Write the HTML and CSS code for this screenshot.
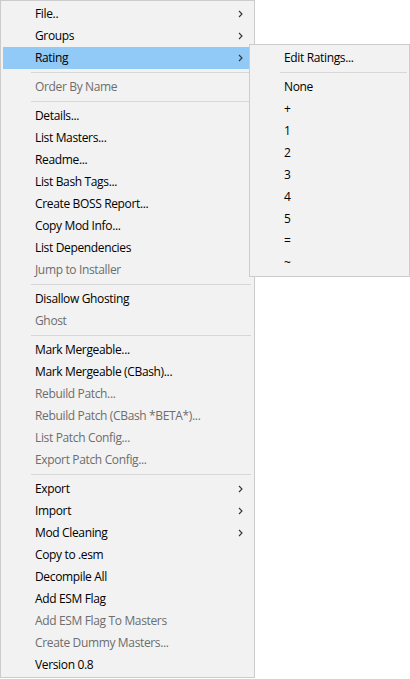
FILE: index.html
```html
<!DOCTYPE html>
<html>
<head>
<meta charset="utf-8">
<link rel="stylesheet" href="styles.css">
</head>
<body>
<div class="stage">
  <div class="menu main">
    <div class="item sub">File..<svg class="arrow" viewBox="0 0 5 8"><path d="M1 1 L4 4 L1 7"/></svg></div>
    <div class="item sub">Groups<svg class="arrow" viewBox="0 0 5 8"><path d="M1 1 L4 4 L1 7"/></svg></div>
    <div class="item sub active">Rating<svg class="arrow" viewBox="0 0 5 8"><path d="M1 1 L4 4 L1 7"/></svg></div>
    <div class="sep"></div>
    <div class="item off">Order By Name</div>
    <div class="sep"></div>
    <div class="item">Details...</div>
    <div class="item">List Masters...</div>
    <div class="item">Readme...</div>
    <div class="item">List Bash Tags...</div>
    <div class="item">Create BOSS Report...</div>
    <div class="item">Copy Mod Info...</div>
    <div class="item">List Dependencies</div>
    <div class="item off">Jump to Installer</div>
    <div class="sep"></div>
    <div class="item">Disallow Ghosting</div>
    <div class="item off">Ghost</div>
    <div class="sep"></div>
    <div class="item">Mark Mergeable...</div>
    <div class="item">Mark Mergeable (CBash)...</div>
    <div class="item off">Rebuild Patch...</div>
    <div class="item off">Rebuild Patch (CBash *BETA*)...</div>
    <div class="item off">List Patch Config...</div>
    <div class="item off">Export Patch Config...</div>
    <div class="sep"></div>
    <div class="item sub">Export<svg class="arrow" viewBox="0 0 5 8"><path d="M1 1 L4 4 L1 7"/></svg></div>
    <div class="item sub">Import<svg class="arrow" viewBox="0 0 5 8"><path d="M1 1 L4 4 L1 7"/></svg></div>
    <div class="item sub">Mod Cleaning<svg class="arrow" viewBox="0 0 5 8"><path d="M1 1 L4 4 L1 7"/></svg></div>
    <div class="item">Copy to .esm</div>
    <div class="item">Decompile All</div>
    <div class="item">Add ESM Flag</div>
    <div class="item off">Add ESM Flag To Masters</div>
    <div class="item off">Create Dummy Masters...</div>
    <div class="item">Version 0.8</div>
  </div>
  <div class="menu submenu">
    <div class="item">Edit Ratings...</div>
    <div class="sep"></div>
    <div class="item">None</div>
    <div class="item">+</div>
    <div class="item">1</div>
    <div class="item">2</div>
    <div class="item">3</div>
    <div class="item">4</div>
    <div class="item">5</div>
    <div class="item">=</div>
    <div class="item">~</div>
  </div>
</div>
</body>
</html>
```

FILE: styles.css
```css
html, body {
  margin: 0;
  padding: 0;
  background: #ffffff;
}

.stage {
  position: relative;
  width: 410px;
  height: 679px;
  font-family: "Open Sans", "Noto Sans", sans-serif;
  font-size: 12px;
  letter-spacing: -0.35px;
  color: #000000;
}

.menu {
  display: flex;
  flex-direction: column;
  box-sizing: border-box;
  background: #f2f2f2;
  border: 1px solid #cccccc;
  padding: 2px;
}

.main {
  width: 255px;
  padding-bottom: 1px;
}

.submenu {
  position: absolute;
  left: 249px;
  top: 44px;
  width: 161px;
}

.item {
  display: flex;
  align-items: center;
  justify-content: space-between;
  height: 22px;
  padding-left: 32px;
  padding-right: 9px;
  white-space: nowrap;
  line-height: 22px;
}

.item.off {
  color: #6d6d6d;
}

.item.active {
  background: #91c9f7;
}

.arrow {
  width: 5px;
  height: 8px;
  fill: none;
  stroke: #333333;
  stroke-width: 1.1;
}

.sep {
  height: 7px;
  margin-left: 28px;
  margin-right: 1px;
  display: flex;
  align-items: center;
}

.sep::before {
  content: "";
  flex: 1;
  height: 1px;
  background: #d7d7d7;
}

.submenu .sep {
  margin-right: 0;
}
```
